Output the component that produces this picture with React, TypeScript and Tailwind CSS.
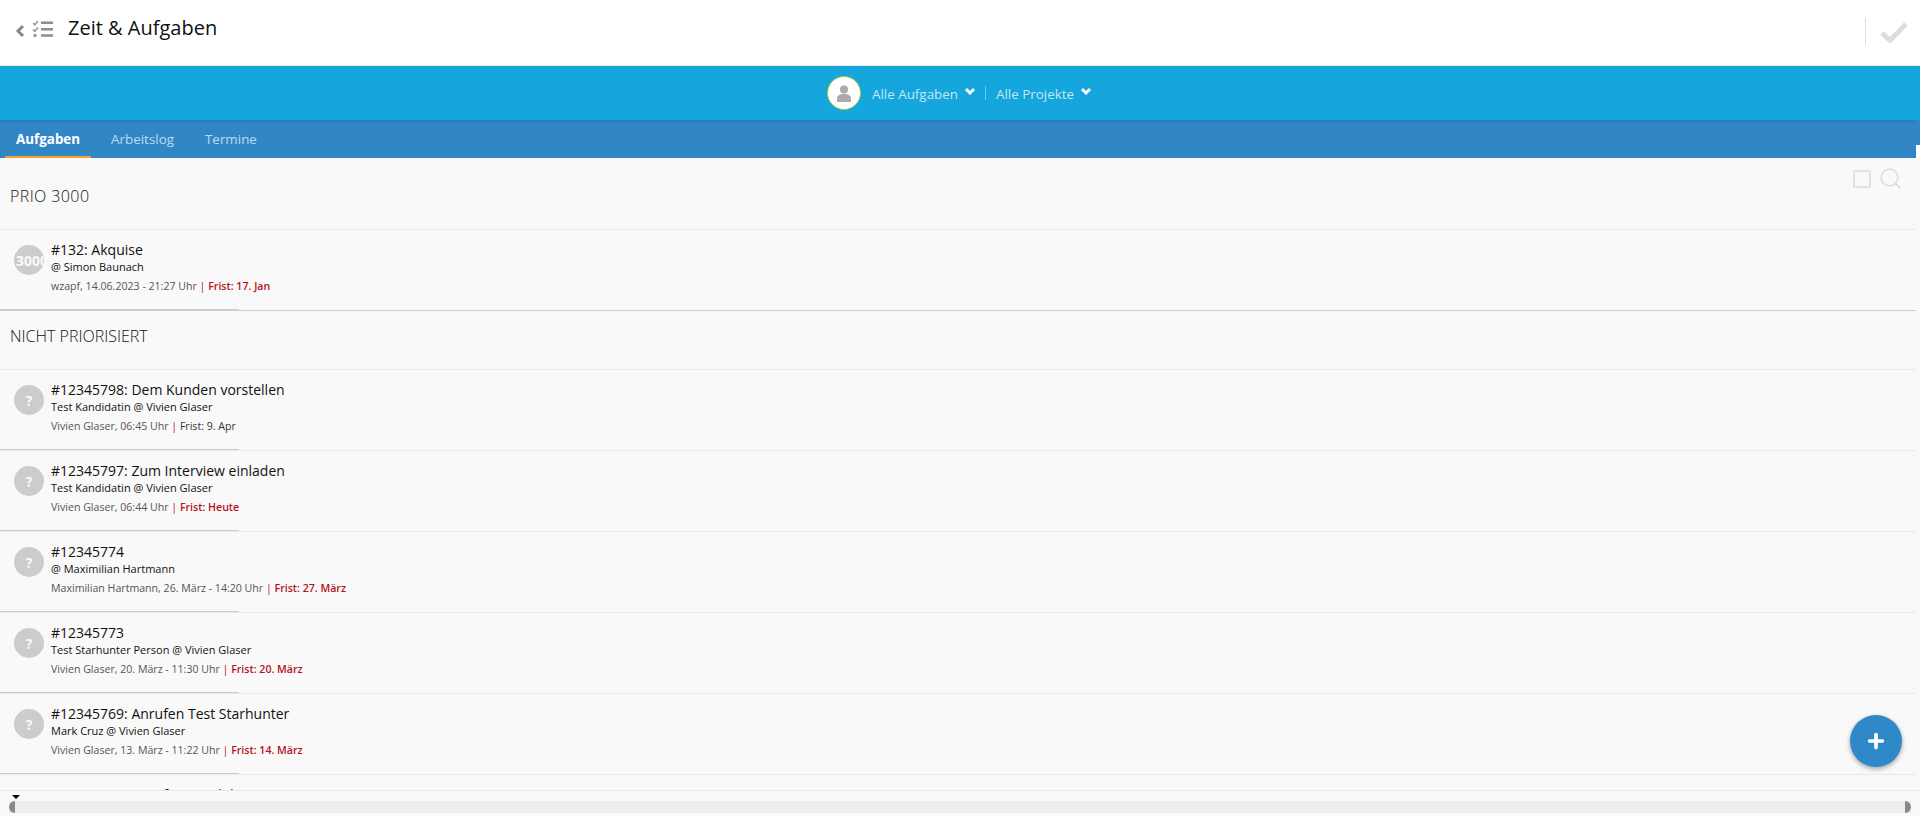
import { Plus, Search } from 'lucide-react';

type Task = {
    badge: string;
    title: string;
    sub: string;
    meta: string;
    due: string;
    overdue: boolean;
};

const prioTasks: Task[] = [
    { badge: '3000', title: '#132: Akquise', sub: '@ Simon Baunach', meta: 'wzapf, 14.06.2023 - 21:27 Uhr', due: 'Frist: 17. Jan', overdue: true },
];

const openTasks: Task[] = [
    { badge: '?', title: '#12345798: Dem Kunden vorstellen', sub: 'Test Kandidatin @ Vivien Glaser', meta: 'Vivien Glaser, 06:45 Uhr', due: 'Frist: 9. Apr', overdue: false },
    { badge: '?', title: '#12345797: Zum Interview einladen', sub: 'Test Kandidatin @ Vivien Glaser', meta: 'Vivien Glaser, 06:44 Uhr', due: 'Frist: Heute', overdue: true },
    { badge: '?', title: '#12345774', sub: '@ Maximilian Hartmann', meta: 'Maximilian Hartmann, 26. März - 14:20 Uhr', due: 'Frist: 27. März', overdue: true },
    { badge: '?', title: '#12345773', sub: 'Test Starhunter Person @ Vivien Glaser', meta: 'Vivien Glaser, 20. März - 11:30 Uhr', due: 'Frist: 20. März', overdue: true },
    { badge: '?', title: '#12345769: Anrufen Test Starhunter', sub: 'Mark Cruz @ Vivien Glaser', meta: 'Vivien Glaser, 13. März - 11:22 Uhr', due: 'Frist: 14. März', overdue: true },
    { badge: '?', title: '#12345768: Anrufen Kandidat', sub: 'Mark Cruz @ Vivien Glaser', meta: 'Vivien Glaser, 13. März - 11:20 Uhr', due: 'Frist: 14. März', overdue: true },
];

function TaskRow({ task, last }: { task: Task; last?: boolean }) {
    return (
        <div className={`flex flex-col h-[81px] w-[1916px] border-b ${last ? 'border-[#cccccc]' : 'border-[#e9e9e9]'}`}>
            <div className="flex flex-1 pl-[14px]">
                <div className="mt-[15px] w-[30px] h-[30px] rounded-full bg-[#cccccc] overflow-hidden flex items-center shrink-0">
                    {task.badge === '?' ? (
                        <span className="w-full text-center text-[14px] font-bold text-white/90">?</span>
                    ) : (
                        <span className="pl-[2px] text-[14px] font-bold text-white/90 whitespace-nowrap">{task.badge}</span>
                    )}
                </div>
                <div className="ml-[7px] pt-[10px]">
                    <div className="text-[14px] leading-[20px] text-[#111111]">{task.title}</div>
                    <div className="text-[11px] leading-[14px] text-[#111111]">{task.sub}</div>
                    <div className="mt-[4px] text-[10.6px] leading-[16px] text-[#555555]">
                        {task.meta}
                        <span className="text-[#b5121b]"> | </span>
                        <span className={task.overdue ? 'font-semibold text-[#b5121b]' : 'text-[#333333]'}>{task.due}</span>
                    </div>
                </div>
            </div>
            <div className="w-[239px] h-px bg-[#cccccc]" />
        </div>
    );
}

export default function App() {
    return (
        <div className="flex flex-col h-[816px] overflow-hidden bg-[#f9f9f9] font-['Open_Sans',sans-serif]">
            <header className="flex items-center h-[66px] pb-[10px] bg-white border-b border-[#e6e6e6] shrink-0">
                <svg width="10" height="14" viewBox="0 0 10 14" className="ml-[15px] mt-[7px]">
                    <path d="M8 2 3 7l5 5" fill="none" stroke="#8a8a8a" strokeWidth="3" />
                </svg>
                <svg width="22" height="18" viewBox="0 0 22 18" className="ml-[7px] mt-[2px]">
                    <path d="M1 3l1.800 1.800L6 1M1 9.500l1.800 1.800L6 7.500" fill="none" stroke="#9a9a9a" strokeWidth="1.600" />
                    <circle cx="3" cy="15.500" r="1.800" fill="#9a9a9a" />
                    <path d="M9 1.500h12v2.600H9zM9 8h12v2.600H9zM9 14.200h12v2.600H9z" fill="#8e8e8e" />
                </svg>
                <h1 className="ml-[14px] text-[20px] text-[#111111]">Zeit &amp; Aufgaben</h1>
                <div className="ml-auto mr-[12px] mt-[8px] flex items-center">
                    <div className="w-px h-[27px] bg-[#dddddd]" />
                    <svg width="30" height="22" viewBox="0 0 30 22" className="ml-[12px]">
                        <path d="M4 12l8 7.500L28 3" fill="none" stroke="#dddddd" strokeWidth="5" />
                    </svg>
                </div>
            </header>

            <div className="flex items-center justify-center h-[54px] pr-[2px] bg-[#14a6dc] text-[13.4px] text-white/75 shrink-0">
                <div className="flex items-center justify-center w-[34px] h-[34px] rounded-full bg-white border border-[#9ccc2c]">
                    <svg width="16" height="17" viewBox="0 0 16 17">
                        <circle cx="8" cy="4.500" r="4" fill="#aaaaaa" />
                        <path d="M1 17v-3.500C1 10.500 3.500 9 8 9s7 1.500 7 4.500V17z" fill="#aaaaaa" />
                    </svg>
                </div>
                <span className="ml-[11px] mt-[2px]">Alle Aufgaben</span>
                <svg width="10" height="8" viewBox="0 0 10 8" className="ml-[7px] -mt-[5px]">
                    <path d="M1 2l4 4 4-4" fill="none" stroke="#ffffff" strokeWidth="3" />
                </svg>
                <div className="ml-[10px] w-px h-[14px] bg-white/40" />
                <span className="ml-[10px] mt-[2px]">Alle Projekte</span>
                <svg width="10" height="8" viewBox="0 0 10 8" className="ml-[7px] -mt-[5px]">
                    <path d="M1 2l4 4 4-4" fill="none" stroke="#ffffff" strokeWidth="3" />
                </svg>
            </div>

            <div className="flex bg-white shrink-0">
                <nav className="flex w-[1916px] h-[38px] pl-[5px] bg-[#3186c6] shadow-[inset_0_2px_3px_-1px_rgba(0,0,0,0.15)] text-[13.4px]">
                    <a className="flex items-center h-full pt-[2px] px-[11px] border-b-2 border-[#f7a030] font-bold text-white">Aufgaben</a>
                    <a className="flex items-center h-full pt-[1px] ml-[20px] text-white/70">Arbeitslog</a>
                    <a className="flex items-center h-full pt-[1px] ml-[31px] text-white/70">Termine</a>
                </nav>
                <div className="w-[4px] h-[25px] bg-[#3186c6]" />
            </div>

            <main className="flex-1 min-h-0 overflow-hidden border-b border-[#e9e9e9]">
                <div className="flex justify-between h-[72px] w-[1916px] border-b border-[#e9e9e9]">
                    <h2 className="mt-[26px] ml-[10px] text-[16px] leading-[24px] tracking-[0.4px] font-light text-[#111111]">PRIO 3000</h2>
                    <div className="flex mt-[8px] mr-[13px] gap-[7px]">
                        <div className="mt-[4px] w-[18px] h-[18px] border-2 border-[#e2e2e2] rounded-[2px]" />
                        <Search size={25} strokeWidth={1.500} className="text-[#dddddd]" />
                    </div>
                </div>
                {prioTasks.map((t) => <TaskRow key={t.title} task={t} last />)}
                <div className="h-[59px] w-[1916px] border-b border-[#e9e9e9]">
                    <h2 className="pt-[13px] ml-[10px] text-[16px] leading-[24px] font-light text-[#111111]">NICHT PRIORISIERT</h2>
                </div>
                {openTasks.map((t) => <TaskRow key={t.title + t.meta} task={t} />)}
            </main>

            <div className="relative h-[25px] shrink-0 pt-[10px] px-[9px]">
                <div className="absolute left-[12px] top-[4px] w-0 h-0 border-x-[4px] border-x-transparent border-t-[4px] border-t-black" />
                <div className="flex justify-between h-[12px] bg-[#eeeeee]">
                    <div className="w-[6px] h-full rounded-l-full bg-[#888888]" />
                    <div className="w-[6px] h-full rounded-r-full bg-[#888888]" />
                </div>
            </div>

            <button className="absolute left-[1850px] top-[715px] flex items-center justify-center w-[52px] h-[52px] rounded-full bg-[#2f88c8] shadow-[0_2px_5px_rgba(0,0,0,0.35)]">
                <Plus size={22} strokeWidth={4} className="text-white" />
            </button>
        </div>
    );
}
